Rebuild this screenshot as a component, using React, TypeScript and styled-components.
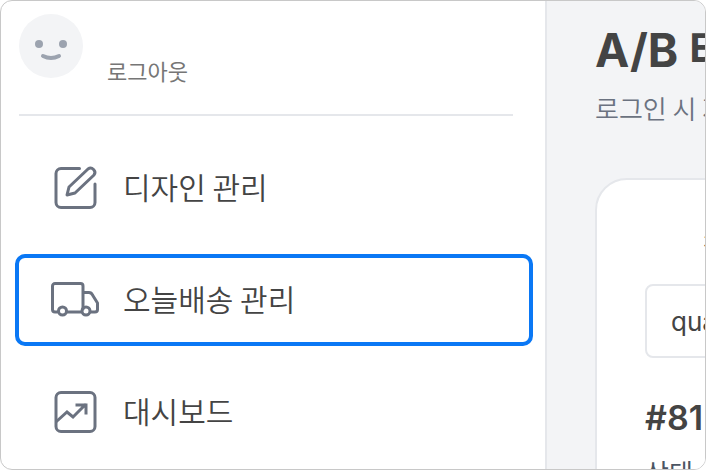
import React from "react";
import styled, { createGlobalStyle } from "styled-components";

const GlobalStyle = createGlobalStyle`
  * { box-sizing: border-box; }
  body { margin: 0; background: #fff; color: #444; font-family: "Noto Sans CJK KR", sans-serif; }
  button, input { font: inherit; color: inherit; }
`;

const Frame = styled.div`
  display: flex;
  height: 100vh;
  border: 1px solid #c8c8c8;
  border-radius: 12px;
  overflow: hidden;
  background: #fff;
`;

const Sidebar = styled.aside`
  flex: 0 0 546px;
  padding: 13px 12px 0 14px;
  border-right: 2px solid #e5e7eb;
`;

const Profile = styled.header`
  display: flex;
  gap: 24px;
  height: 102px;
  margin: 0 20px 0 4px;
  border-bottom: 2px solid #e5e7eb;
`;

const Avatar = styled.svg`
  width: 64px;
  height: 64px;
`;

const LogoutButton = styled.button`
  align-self: flex-start;
  margin-top: 40px;
  padding: 0;
  border: 0;
  background: none;
  color: #767676;
  font-size: 22px;
  line-height: 32px;
  cursor: pointer;
`;

const Menu = styled.nav`
  display: flex;
  flex-direction: column;
  gap: 20px;
  padding-top: 26px;
`;

const MenuLink = styled.a<{ $active?: boolean }>`
  display: flex;
  align-items: center;
  gap: 24px;
  height: 92px;
  padding: 0 32px;
  border: 4px solid ${(p) => (p.$active ? "#0a78f5" : "transparent")};
  border-radius: 10px;
  color: #444;
  font-size: 30px;
  font-weight: 350;
  line-height: 40px;
  text-decoration: none;
`;

const MenuLabel = styled.span`
  padding-bottom: 4px;
`;

const Icon = styled.svg`
  width: 48px;
  height: 48px;
  fill: none;
  stroke: #6b7280;
  stroke-width: 3;
  stroke-linecap: round;
  stroke-linejoin: round;
`;

const Main = styled.main`
  flex: 1;
  min-width: 0;
  overflow: hidden;
  padding: 23px 0 0 48px;
  background: #f3f4f6;
  white-space: nowrap;
`;

const Title = styled.h1`
  margin: 0;
  font-family: Inter, "Noto Sans CJK KR", sans-serif;
  font-size: 46px;
  font-weight: 700;
  line-height: 52px;
`;

const Description = styled.p`
  margin: 12px 0 0;
  color: #6b7280;
  font-size: 26px;
  font-weight: 350;
  line-height: 40px;
`;

const Card = styled.section`
  width: 560px;
  margin-top: 50px;
  padding: 44px 48px;
  border: 2px solid #e5e7eb;
  border-radius: 32px;
  background: #fff;
`;

const Label = styled.label`
  display: block;
  padding-left: 58px;
  font-size: 24px;
  line-height: 40px;
`;

const SearchInput = styled.input`
  display: block;
  width: 100%;
  height: 74px;
  margin-top: 20px;
  padding: 0 24px;
  border: 2px solid #e5e7eb;
  border-radius: 8px;
  background: #fff;
  font-family: Inter, "Noto Sans CJK KR", sans-serif;
  font-size: 26px;
`;

const ItemTitle = styled.h2`
  margin: 36px 0 0;
  font-family: Inter, "Noto Sans CJK KR", sans-serif;
  font-size: 34px;
  font-weight: 600;
  line-height: 48px;
`;

const Status = styled.p`
  margin: 10px 0 0;
  color: #4b5563;
  font-size: 26px;
  line-height: 40px;
`;

const EditIcon = () => (
  <Icon viewBox="0 0 48 48" aria-hidden="true">
    <path d="M28.500 4.500H10a5 5 0 0 0-5 5v29a5 5 0 0 0 5 5h29a5 5 0 0 0 5-5V20" />
    <path d="M16 31l2-8L37 5a4.300 4.300 0 0 1 6 6L24 29Z" />
  </Icon>
);

const TruckIcon = () => (
  <Icon viewBox="0 0 48 48" aria-hidden="true">
    <path d="M6 36H4a2.500 2.500 0 0 1-2.500-2.500V10A2.500 2.500 0 0 1 4 7.500h25.500A2.500 2.500 0 0 1 32 10v23M16 36h14M40 36h4a2.500 2.500 0 0 0 2.500-2.500V27l-5-8a4 4 0 0 0-4-2.500H33" />
    <circle cx="11.500" cy="35" r="4" />
    <circle cx="35" cy="35" r="4" />
  </Icon>
);

const ChartIcon = () => (
  <Icon viewBox="0 0 48 48" aria-hidden="true">
    <rect x="5" y="4.500" width="39" height="39" rx="5" />
    <path d="M6 33l10-9 6 5 12-12M26 17h9v8" strokeLinecap="square" strokeLinejoin="miter" />
  </Icon>
);

const menu = [
  { label: "디자인 관리", Glyph: EditIcon, active: false },
  { label: "오늘배송 관리", Glyph: TruckIcon, active: true },
  { label: "대시보드", Glyph: ChartIcon, active: false },
];

export default function App() {
  return (
    <Frame>
      <GlobalStyle />
      <Sidebar>
        <Profile>
          <Avatar viewBox="0 0 64 64" aria-hidden="true">
            <circle cx="32" cy="32" r="32" fill="#f3f4f6" />
            <circle cx="20" cy="30" r="4" fill="#9ca3af" />
            <circle cx="44" cy="30" r="4" fill="#9ca3af" />
            <path d="M24 42q8 4 16 0" fill="none" stroke="#9ca3af" strokeWidth="4" strokeLinecap="round" />
          </Avatar>
          <LogoutButton type="button">로그아웃</LogoutButton>
        </Profile>
        <Menu>
          {menu.map(({ label, Glyph, active }) => (
            <MenuLink key={label} href="#" $active={active}>
              <Glyph />
              <MenuLabel>{label}</MenuLabel>
            </MenuLink>
          ))}
        </Menu>
      </Sidebar>
      <Main>
        <Title>A/B 테스트</Title>
        <Description>로그인 시 자동</Description>
        <Card>
          <Label htmlFor="search">참가</Label>
          <SearchInput id="search" defaultValue="quality" />
          <ItemTitle>#81</ItemTitle>
          <Status>상태</Status>
        </Card>
      </Main>
    </Frame>
  );
}
